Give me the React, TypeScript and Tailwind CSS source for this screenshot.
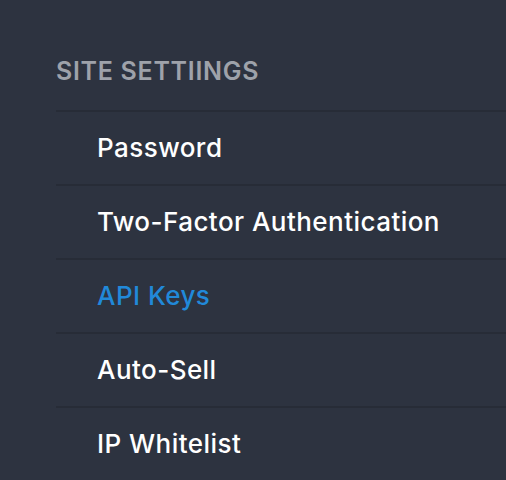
import React from "react";

const items = [
  { label: "Password", active: false },
  { label: "Two-Factor Authentication", active: false },
  { label: "API Keys", active: true },
  { label: "Auto-Sell", active: false },
  { label: "IP Whitelist", active: false },
];

export default function App() {
  return (
    <div
      className="w-[506px] h-[480px] bg-[#2d3340] pl-[56px] overflow-hidden"
      style={{ fontFamily: "Inter, 'Liberation Sans', sans-serif" }}
    >
      <div className="h-[110px] flex items-center pt-[32px]">
        <h2 className="text-[25px] font-semibold tracking-[0.7px] text-[#9ea2aa] leading-none">
          SITE SETTIINGS
        </h2>
      </div>
      <ul>
        {items.map((it) => (
          <li
            key={it.label}
            className="h-[74px] border-t-2 border-[#272c37] flex items-center pl-[41px]"
          >
            <span
              className={`text-[26px] font-medium tracking-[0.45px] leading-none ${
                it.active ? "text-[#2189d9]" : "text-white"
              }`}
            >
              {it.label}
            </span>
          </li>
        ))}
      </ul>
    </div>
  );
}
